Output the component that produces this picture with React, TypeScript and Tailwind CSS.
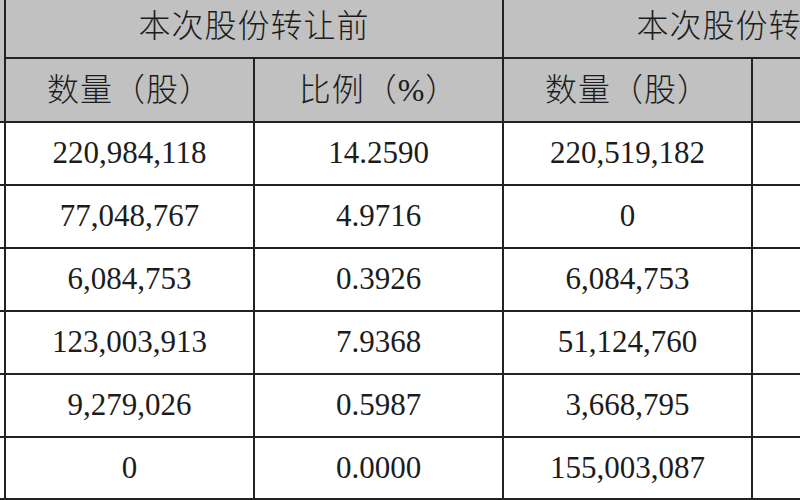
import React from "react";

const rows = [
  ["220,984,118", "14.2590", "220,519,182"],
  ["77,048,767", "4.9716", "0"],
  ["6,084,753", "0.3926", "6,084,753"],
  ["123,003,913", "7.9368", "51,124,760"],
  ["9,279,026", "0.5987", "3,668,795"],
  ["0", "0.0000", "155,003,087"],
];

const font = { fontFamily: '"Liberation Serif", "Noto Sans CJK SC", serif' };

export default function App() {
  return (
    <div className="w-[800px] h-[500px] overflow-hidden bg-white text-[#1c1c1c]" style={font}>
      <table className="border-collapse table-fixed -ml-[96px] -mt-[7px] w-[1096px]">
        <colgroup>
          <col className="w-[100px]" />
          <col className="w-[249px]" />
          <col className="w-[249px]" />
          <col className="w-[249px]" />
          <col className="w-[249px]" />
        </colgroup>
        <tbody>
          <tr className="h-[64px] bg-[#c1c1c1]">
            <td rowSpan={2} className="border-2 border-[#222]" />
            <td colSpan={2} className="border-2 border-[#222] text-center text-[32px] tracking-[1px] font-light whitespace-nowrap">
              本次股份转让前
            </td>
            <td colSpan={2} className="border-2 border-[#222] text-center text-[32px] tracking-[1px] font-light whitespace-nowrap">
              本次股份转让后
            </td>
          </tr>
          <tr className="h-[64px] bg-[#c1c1c1]">
            <td className="border-2 border-[#222] text-center text-[32px] tracking-[1px] font-light whitespace-nowrap">数量（股）</td>
            <td className="border-2 border-[#222] text-center text-[32px] tracking-[1px] font-light whitespace-nowrap">比例（%）</td>
            <td className="border-2 border-[#222] text-center text-[32px] tracking-[1px] font-light whitespace-nowrap">数量（股）</td>
            <td className="border-2 border-[#222] text-center text-[32px] tracking-[1px] font-light whitespace-nowrap">比例（%）</td>
          </tr>
          {rows.map((r, i) => (
            <tr key={i} className={i === rows.length - 1 ? "h-[62px]" : "h-[63px]"}>
              <td className="border-2 border-[#222]" />
              <td className="border-2 border-[#222] text-center text-[31px]">{r[0]}</td>
              <td className="border-2 border-[#222] text-center text-[31px]">{r[1]}</td>
              <td className="border-2 border-[#222] text-center text-[31px]">{r[2]}</td>
              <td className="border-2 border-[#222]" />
            </tr>
          ))}
          <tr className="h-[40px]">
            <td className="border-t-[3px] border-[#222]" colSpan={5} />
          </tr>
        </tbody>
      </table>
    </div>
  );
}
